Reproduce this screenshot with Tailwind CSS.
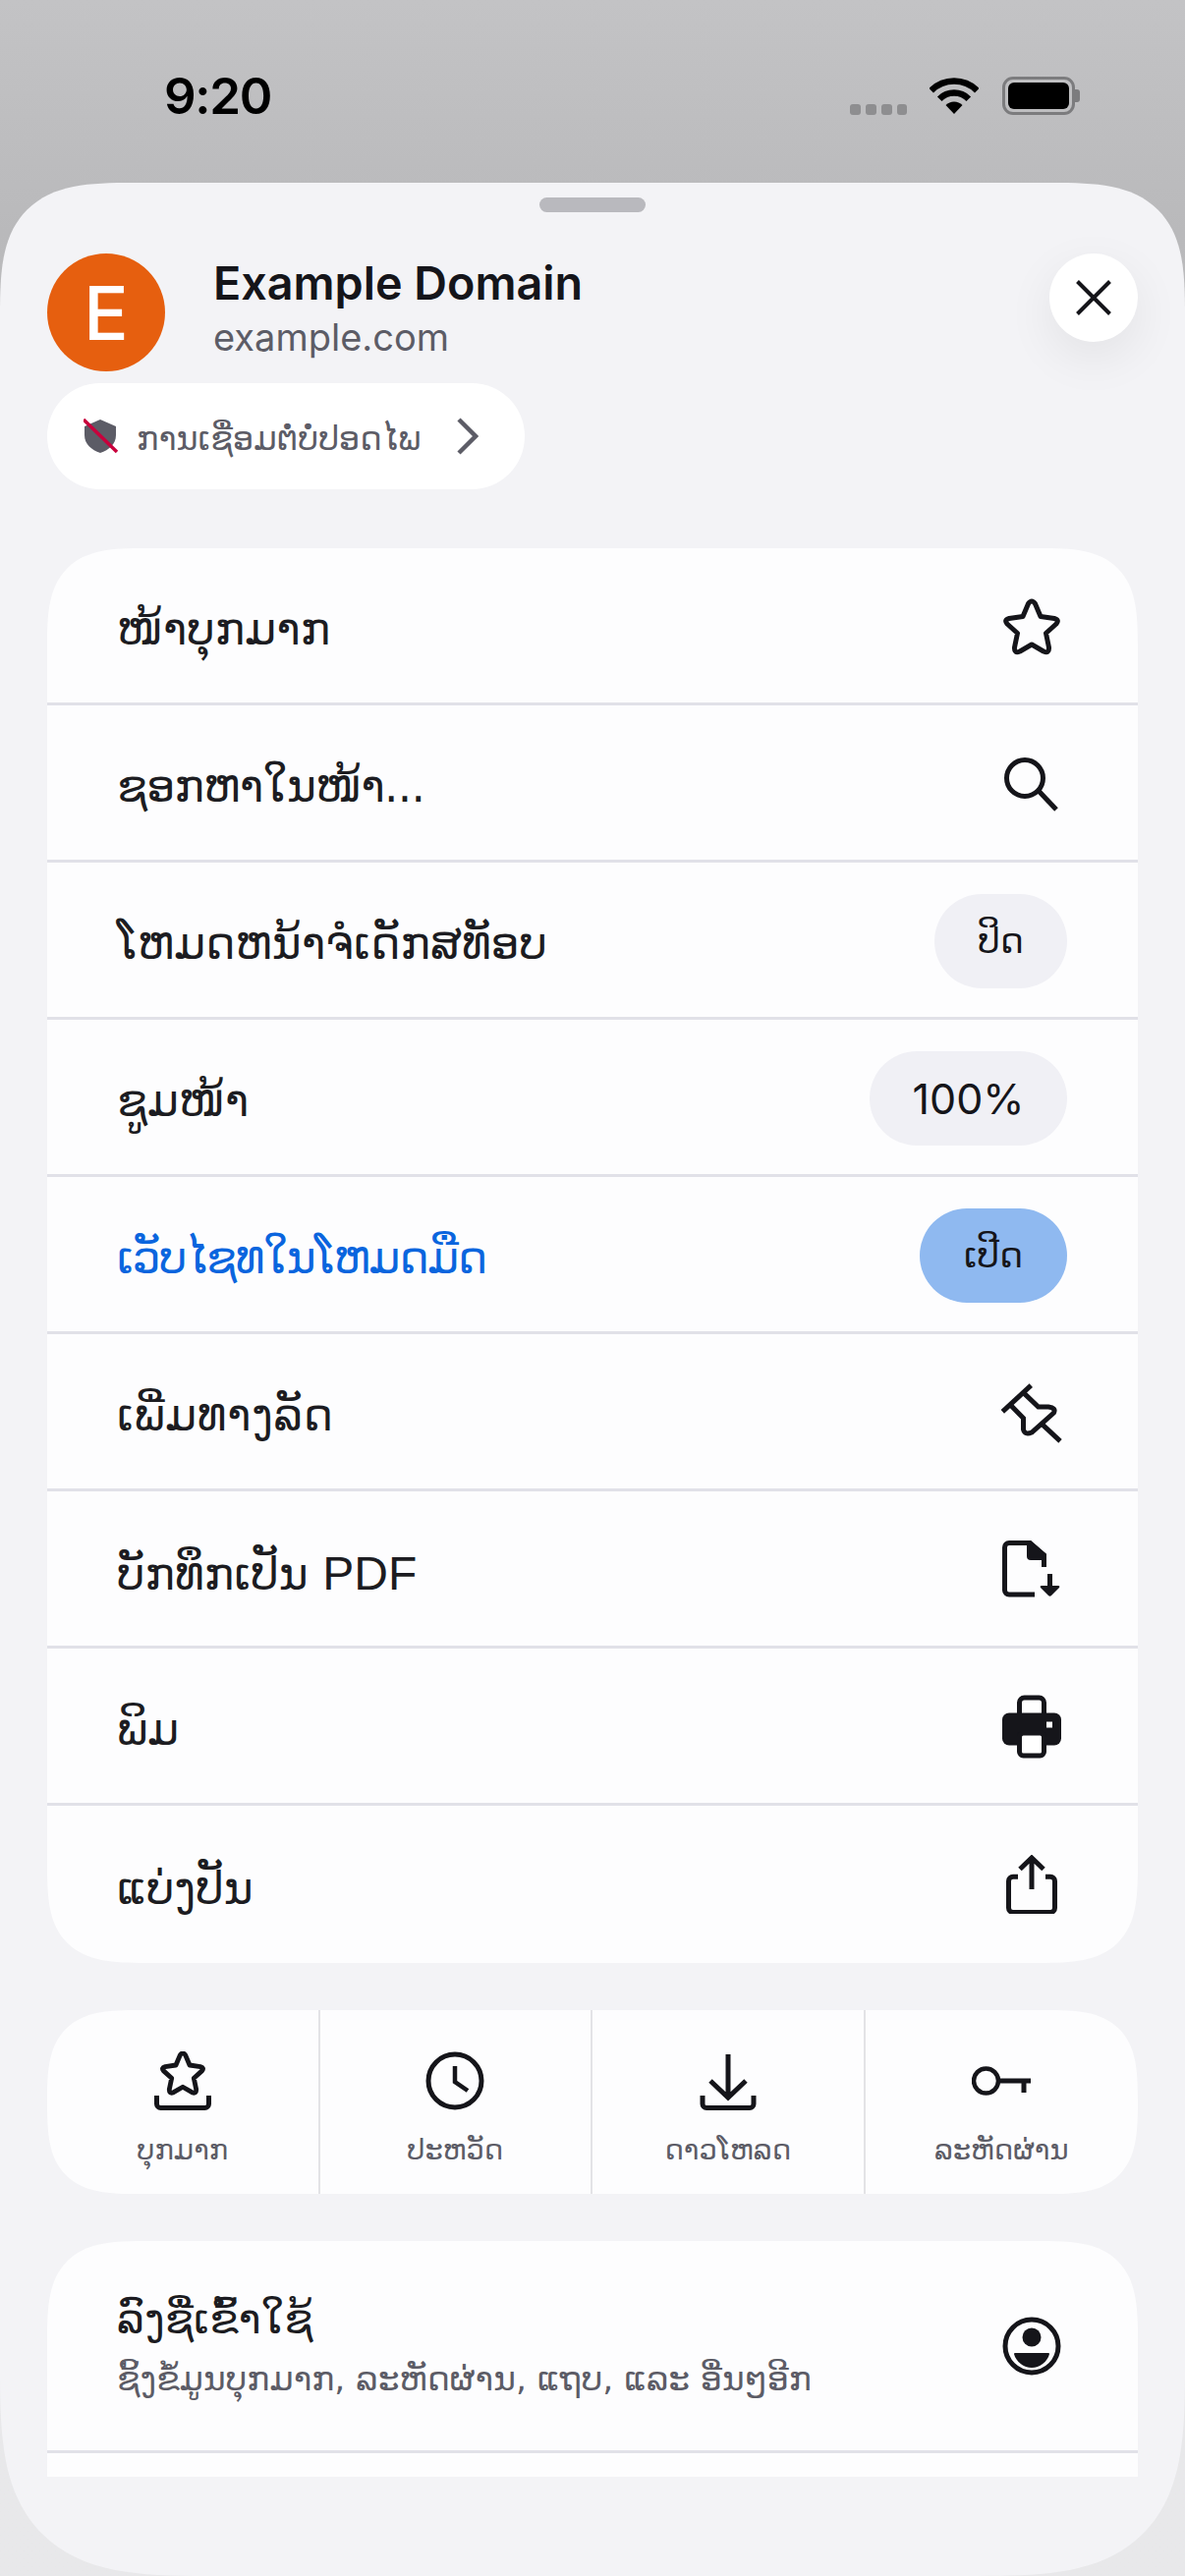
<!doctype html>
<html><head><meta charset="utf-8"><script src="https://cdn.jsdelivr.net/npm/@tailwindcss/browser@4"></script></head>
<body class="m-0">
<div class="w-[1206px] h-[2622px] overflow-hidden bg-gradient-to-b from-[#c3c3c5] via-[#b9b9bb] via-[9%] to-[#e8e8ea] to-[94%] font-['Inter','DejaVu_Sans',sans-serif]">
  <div class="h-[186px] flex justify-between items-start pt-[70px] pl-[167px] pr-[107px]">
    <div class="text-[51px] font-semibold tracking-[-1.3px] leading-[56px] text-black">9:20</div>
    <div class="flex items-start">
      <div class="flex gap-[5px] mt-[36px]">
        <div class="w-[11px] h-[11px] rounded-[3px] bg-[#8e8e90]"></div><div class="w-[11px] h-[11px] rounded-[3px] bg-[#8e8e90]"></div><div class="w-[11px] h-[11px] rounded-[3px] bg-[#8e8e90]"></div><div class="w-[10px] h-[11px] rounded-[3px] bg-[#8e8e90]"></div>
      </div>
      <svg class="ml-[23px] mt-[9px]" width="50" height="37" viewBox="0 0 50 37"><path d="M1.7 13.2A33 33 0 0 1 48.3 13.2" fill="none" stroke="#000" stroke-width="6.5"/><path d="M10.2 21.7A21 21 0 0 1 39.8 21.7" fill="none" stroke="#000" stroke-width="6.5"/><path d="M25 37L16.5 28A12 12 0 0 1 33.5 28Z" fill="#000"/></svg>
      <div class="ml-[24px] mt-[8px] flex items-center">
        <div class="w-[74px] h-[39px] rounded-[11px] border-[3px] border-[#7c7c7e] p-[3px]"><div class="w-full h-full rounded-[6px] bg-black"></div></div>
        <div class="w-[5px] h-[13px] rounded-r-[3px] bg-[#7c7c7e]"></div>
      </div>
    </div>
  </div>
  <div class="h-[2436px] bg-[#f3f3f6] rounded-t-[135px] rounded-b-[210px] [corner-shape:superellipse(1.6)] px-[48px] relative">
    <div class="absolute left-[549px] top-[15px] w-[108px] h-[15px] rounded-full bg-[#b9b9be]"></div>
    <div class="pt-[72px] flex items-start">
      <div class="w-[120px] h-[120px] rounded-full bg-[#e65f0f] text-white text-[76px] font-medium leading-none flex items-center justify-center">E</div>
      <div class="ml-[49px]">
        <div class="text-[46.7px] font-semibold leading-[60px] text-[#15151a]">Example Domain</div>
        <div class="text-[38px] leading-[50px] text-[#5c5c66]">example.com</div>
      </div>
      <div class="ml-auto w-[90px] h-[90px] rounded-full bg-white shadow-[0_16px_50px_rgba(0,0,0,0.07)] flex items-center justify-center">
        <svg width="36" height="36" viewBox="0 0 36 36"><path d="M1.5 1.5L34.5 34.5M34.5 1.5L1.5 34.5" stroke="#15151a" stroke-width="4"/></svg>
      </div>
    </div>
    <div class="mt-[12px] w-[486px] h-[108px] rounded-[54px] bg-white flex items-center pl-[37px] text-[#5c5c66] text-[33.5px] font-['DejaVu_Sans',sans-serif]">
      <svg class="shrink-0 mr-[18px]" width="36" height="36" viewBox="0 0 36 36"><path d="M17 1L33 8V17C33 26 26 32 17 35C8 32 1 26 1 17V8Z" fill="#5c5c66"/><path d="M0 1L34 34" stroke="#c8003c" stroke-width="3.5"/></svg>
      <span class="mt-[6px]">ການເຊື່ອມຕໍ່ບໍ່ປອດໄພ</span>
      <svg class="shrink-0 ml-[37px]" width="22" height="38" viewBox="0 0 22 38"><path d="M2 2L19 19L2 36" fill="none" stroke="#5c5c66" stroke-width="4.5"/></svg>
    </div>

    <div class="mt-[60px] bg-[#fdfdfe] rounded-[100px] [corner-shape:superellipse(1.6)] overflow-hidden font-['DejaVu_Sans',sans-serif] text-[45.5px] text-[#1c1c21]">
      <div class="h-[160px] flex items-center justify-between pl-[71px] pr-[72px] border-b-[3px] border-[#e1e1e8]"><span class="mt-[10px]">ໜ້າບຸກມາກ</span>
        <svg class="mr-[6px]" width="60" height="60" viewBox="0 0 60 60"><path d="M26.5 7.5Q30 2.5 33.5 7.5L39 20.5L53 22.5Q58.5 24 55 28L44.5 37.5L47.5 52Q48 58.5 42 56L30 49L18 56Q12 58.5 12.5 52L15.5 37.5L5 28Q1.5 24 7 22.5L21 20.5Z" fill="none" stroke="#15151a" stroke-width="5" stroke-linejoin="round"/></svg>
      </div>
      <div class="h-[160px] flex items-center justify-between pl-[71px] pr-[72px] border-b-[3px] border-[#e1e1e8]"><span class="mt-[10px] tracking-[-0.7px]">ຊອກຫາໃນໜ້າ...</span>
        <svg class="mr-[6px]" width="60" height="60" viewBox="0 0 60 60"><circle cx="23" cy="25" r="18.5" fill="none" stroke="#15151a" stroke-width="5"/><path d="M37 38L55 57" stroke="#15151a" stroke-width="5"/></svg>
      </div>
      <div class="h-[160px] flex items-center justify-between pl-[71px] pr-[72px] border-b-[3px] border-[#e1e1e8]"><span class="mt-[10px]">ໂຫມດຫນ້າຈໍເດັກສທັອບ</span>
        <div class="mt-[3px] w-[135px] h-[96px] rounded-full bg-[#f0f0f5] flex items-center justify-center text-[36px] text-[#15151a]">ປິດ</div>
      </div>
      <div class="h-[160px] flex items-center justify-between pl-[71px] pr-[72px] border-b-[3px] border-[#e1e1e8]"><span class="mt-[10px]">ຊູມໜ້າ</span>
        <div class="mt-[3px] w-[201px] h-[96px] rounded-full bg-[#f0f0f5] flex items-center justify-center text-[43px] text-[#15151a] font-['Inter',sans-serif]">100%</div>
      </div>
      <div class="h-[160px] flex items-center justify-between pl-[71px] pr-[72px] border-b-[3px] border-[#e1e1e8]"><span class="mt-[10px] text-[#0a65de] tracking-[-1.4px]">ເວັບໄຊທໃນໂຫມດມືດ</span>
        <div class="mt-[3px] w-[150px] h-[96px] rounded-full bg-[#8fb9f0] flex items-center justify-center text-[36px] text-[#15151a]">ເປີດ</div>
      </div>
      <div class="h-[160px] flex items-center justify-between pl-[71px] pr-[72px] border-b-[3px] border-[#e1e1e8]"><span class="mt-[10px] tracking-[0.5px]">ເພີ່ມທາງລັດ</span>
        <svg class="mr-[6px] overflow-visible" width="60" height="60" viewBox="0 0 60 60"><g transform="translate(0,2)" fill="none" stroke="#15151a" stroke-width="5"><path d="M0.3 27.9L29.3 1.1"/><path d="M22.7 9.6L36.7 23H47Q55 24 52.5 29L30 49Q23 52 21.5 46V34.4L8.3 21"/><path d="M40 40.2L59 57.8"/></g></svg>
      </div>
      <div class="h-[160px] flex items-center justify-between pl-[71px] pr-[72px] border-b-[3px] border-[#e1e1e8]"><span class="mt-[10px]">ບັກທຶກເປັນ <span class="font-['Liberation_Sans',sans-serif] text-[48px]">PDF</span></span>
        <svg class="mr-[6px]" width="60" height="60" viewBox="0 0 60 60"><path d="M33 56H7A4.5 4.5 0 0 1 2.5 51.5V8A4.5 4.5 0 0 1 7 3.5H28L42.5 16V28" fill="none" stroke="#15151a" stroke-width="5"/><path d="M25 1H29L45 15V21H29A4 4 0 0 1 25 17Z" fill="#15151a"/><path d="M46 35H51V47H57Q59 47 58 49L50 57Q48.5 58.5 47 57L39 49Q38 47 40 47H46Z" fill="#15151a"/></svg>
      </div>
      <div class="h-[160px] flex items-center justify-between pl-[71px] pr-[72px] border-b-[3px] border-[#e1e1e8]"><span class="mt-[10px]">ພິມ</span>
        <svg class="mr-[6px] overflow-visible" width="60" height="60" viewBox="0 0 60 60"><rect x="0" y="16.5" width="60" height="33" rx="7" fill="#15151a"/><rect x="17.5" y="1" width="25" height="30" rx="5" fill="#fff" stroke="#15151a" stroke-width="5"/><rect x="15" y="16.5" width="30" height="20" fill="#15151a"/><rect x="17.5" y="37" width="25" height="23" rx="4" fill="#fff" stroke="#15151a" stroke-width="5"/><rect x="45" y="25.5" width="6" height="6" fill="#fff"/></svg>
      </div>
      <div class="h-[160px] flex items-center justify-between pl-[71px] pr-[72px]"><span class="mt-[10px]">ແບ່ງປັນ</span>
        <svg class="mr-[6px]" width="60" height="60" viewBox="0 0 60 60"><path d="M16 22.2H11A4.5 4.5 0 0 0 6.5 26.7V54A4.5 4.5 0 0 0 11 58.5H49A4.5 4.5 0 0 0 53.5 54V26.7A4.5 4.5 0 0 0 49 22.2H44" fill="none" stroke="#15151a" stroke-width="5"/><path d="M30 3V35M18 14.5L30 3L42 14.5" fill="none" stroke="#15151a" stroke-width="5"/></svg>
      </div>
    </div>

    <div class="mt-[48px] h-[187px] bg-[#fdfdfe] rounded-[100px] [corner-shape:superellipse(1.6)] overflow-hidden grid grid-cols-4 font-['DejaVu_Sans',sans-serif] text-[29px] text-[#5c5c66]">
      <div class="flex flex-col items-center pt-[42px] border-r-2 border-[#e3e3e6]">
        <svg width="60" height="60" viewBox="0 0 60 60"><g transform="translate(6.6,-2) scale(0.78)"><path d="M26.5 7.5Q30 2.5 33.5 7.5L39 20.5L53 22.5Q58.5 24 55 28L44.5 37.5L47.5 52Q48 58.5 42 56L30 49L18 56Q12 58.5 12.5 52L15.5 37.5L5 28Q1.5 24 7 22.5L21 20.5Z" fill="none" stroke="#15151a" stroke-width="6.2" stroke-linejoin="round"/></g><path d="M3.5 45V53.5A4 4 0 0 0 7.5 57.5H52.5A4 4 0 0 0 56.5 53.5V45" fill="none" stroke="#15151a" stroke-width="5"/></svg>
        <span class="mt-[20px] leading-[40px]">ບຸກມາກ</span>
      </div>
      <div class="flex flex-col items-center pt-[42px] border-r-2 border-[#e3e3e6]">
        <svg width="60" height="60" viewBox="0 0 60 60"><circle cx="30" cy="30" r="27" fill="none" stroke="#15151a" stroke-width="5"/><path d="M30 15V31L43 40" fill="none" stroke="#15151a" stroke-width="4.5"/></svg>
        <span class="mt-[20px] leading-[40px]">ປະຫວັດ</span>
      </div>
      <div class="flex flex-col items-center pt-[42px] border-r-2 border-[#e3e3e6]">
        <svg width="60" height="60" viewBox="0 0 60 60"><path d="M30 3V47M12 30L30 47L48 30" fill="none" stroke="#15151a" stroke-width="5"/><path d="M4 45V53.5A4 4 0 0 0 8 57.5H52A4 4 0 0 0 56 53.5V45" fill="none" stroke="#15151a" stroke-width="5"/></svg>
        <span class="mt-[20px] leading-[40px]">ດາວໂຫລດ</span>
      </div>
      <div class="flex flex-col items-center pt-[42px]">
        <svg width="60" height="60" viewBox="0 0 60 60"><circle cx="14.5" cy="30" r="12.5" fill="none" stroke="#15151a" stroke-width="4.5"/><path d="M27 30H60M53 30V42" fill="none" stroke="#15151a" stroke-width="5"/></svg>
        <span class="mt-[20px] leading-[40px]">ລະຫັດຜ່ານ</span>
      </div>
    </div>

    <div class="mt-[48px] h-[240px] bg-[#fdfdfe] rounded-t-[100px] [corner-shape:superellipse(1.6)] overflow-hidden font-['DejaVu_Sans',sans-serif]">
      <div class="h-[216px] flex items-center justify-between pl-[71px] pr-[72px] border-b-[3px] border-[#e1e1e8]">
        <div class="flex flex-col">
          <span class="text-[43px] leading-[60px] text-[#1c1c21]">ລົງຊື່ເຂົ້າໃຊ້</span>
          <span class="text-[34.5px] leading-[50px] mt-[6px] text-[#5c5c66]">ຊິ້ງຂໍ້ມູນບຸກມາກ, ລະຫັດຜ່ານ, ແຖບ, ແລະ ອື່ນໆອີກ</span>
        </div>
        <svg class="mr-[6px]" width="60" height="60" viewBox="0 0 60 60"><circle cx="30" cy="30" r="27" fill="none" stroke="#15151a" stroke-width="5"/><circle cx="30" cy="21" r="9.5" fill="#15151a"/><path d="M12 38Q12 37 13 37H47Q48 37 48 38C46 46 38 52 30 52C22 52 14 46 12 38Z" fill="#15151a"/></svg>
      </div>
    </div>
  </div>
</div>
</body></html>
